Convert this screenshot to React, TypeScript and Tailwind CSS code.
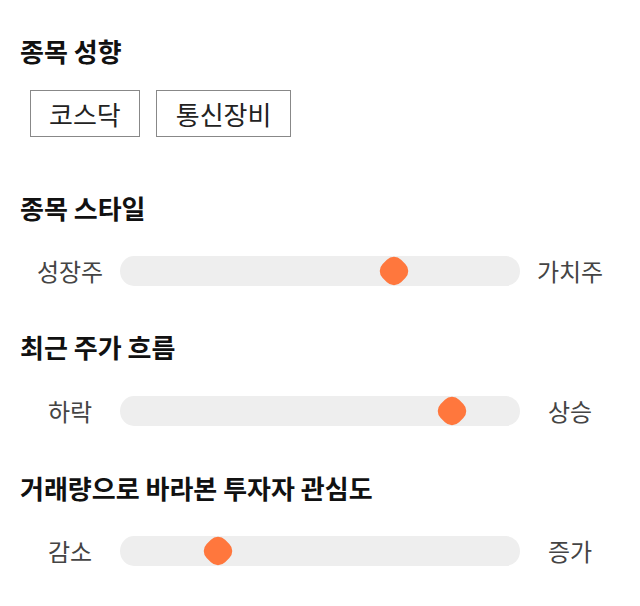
import React from "react";

const font = { fontFamily: '"Noto Sans CJK KR", "Noto Sans", sans-serif' };

function Title({ children, className = "" }: { children: React.ReactNode; className?: string }) {
  return (
    <div className={"text-[26px] font-bold leading-[32px] text-[#111] " + className}>{children}</div>
  );
}

function Slider({ left, right, pos }: { left: string; right: string; pos: number }) {
  return (
    <div className="grid grid-cols-[100px_1fr_100px] items-center h-[30px]">
      <div className="text-center text-[24px] leading-[30px] text-[#444]">{left}</div>
      <div className="relative h-[30px] bg-[#eeeeee] rounded-[14px_/_15px]">
        <div
          className="absolute top-1/2 w-[26px] h-[26px] -translate-x-1/2 -translate-y-1/2 rotate-45 rounded-[10px] bg-[#ff773d]"
          style={{ left: `${pos}%` }}
        />
      </div>
      <div className="text-center text-[24px] leading-[30px] text-[#444]">{right}</div>
    </div>
  );
}

export default function App() {
  return (
    <div className="w-[640px] h-[606px] bg-white px-5 pt-[35px]" style={font}>
      <Title>종목 성향</Title>
      <div className="flex gap-4 mt-[23px] ml-[10px]">
        <div className="h-[47px] border border-[#888] px-[18px] flex items-center text-[26px] text-[#222]">코스닥</div>
        <div className="h-[47px] border border-[#888] px-[19px] flex items-center text-[26px] text-[#222]">통신장비</div>
      </div>
      <Title className="mt-[55px]">종목 스타일</Title>
      <div className="mt-[32px]">
        <Slider left="성장주" right="가치주" pos={68.5} />
      </div>
      <Title className="mt-[45px]">최근 주가 흐름</Title>
      <div className="mt-[33px]">
        <Slider left="하락" right="상승" pos={83} />
      </div>
      <Title className="mt-[46px]">거래량으로 바라본 투자자 관심도</Title>
      <div className="mt-[32px]">
        <Slider left="감소" right="증가" pos={24.5} />
      </div>
    </div>
  );
}
